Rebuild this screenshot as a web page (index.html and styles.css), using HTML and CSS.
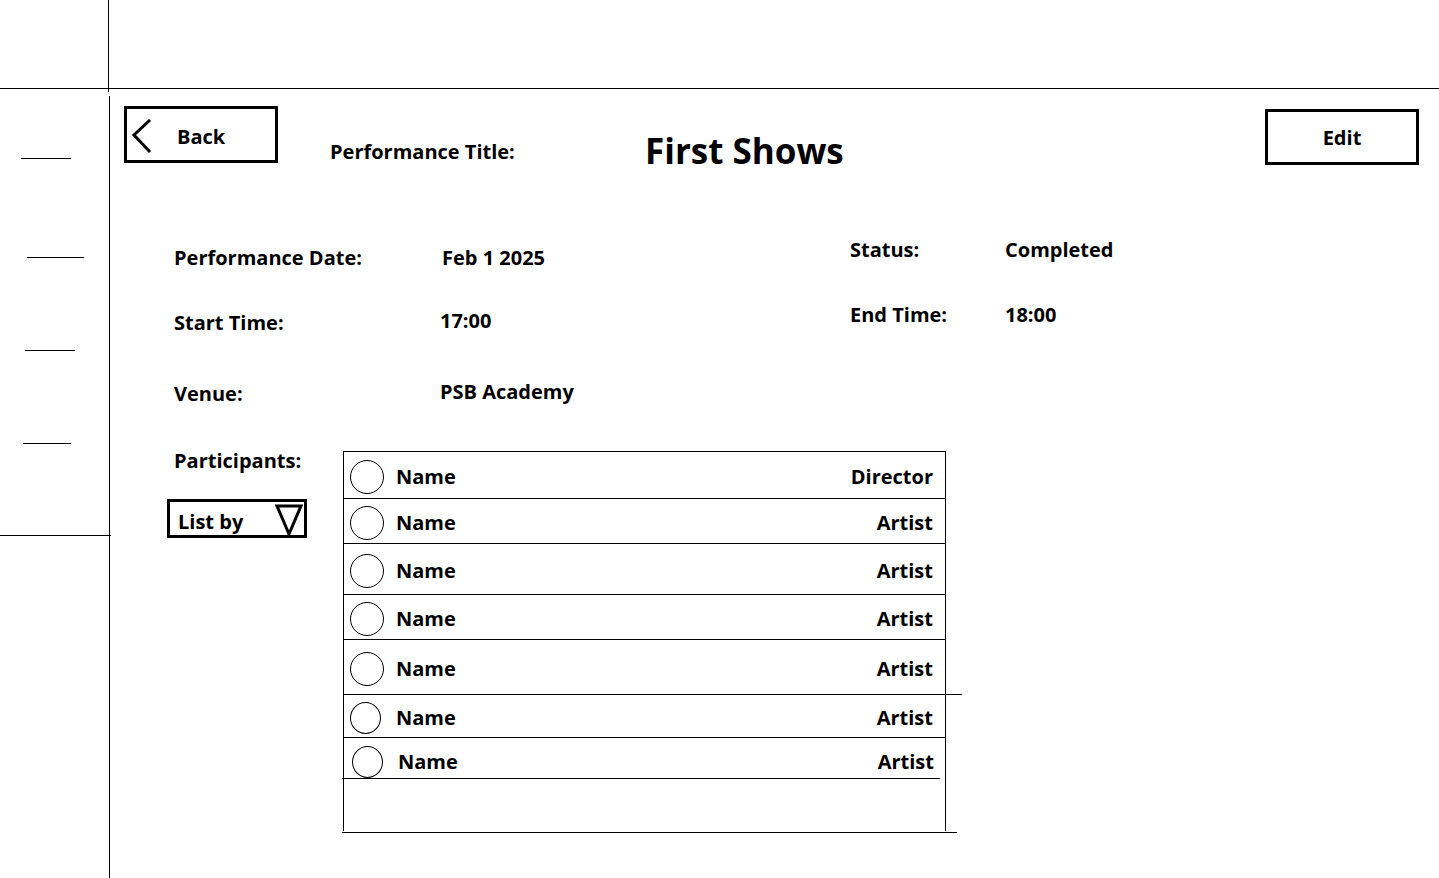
FILE: index.html
```html
<!DOCTYPE html>
<html lang="en">
<head>
<meta charset="utf-8">
<title>Performance Details</title>
<link rel="stylesheet" href="styles.css">
</head>
<body>
<div class="app">
  <header class="topbar">
    <div class="corner"></div>
  </header>
  <div class="layout">
    <nav class="sidebar">
      <span class="dash dash-1"></span>
      <span class="dash dash-2"></span>
      <span class="dash dash-3"></span>
      <span class="dash dash-4"></span>
      <span class="side-rule"></span>
    </nav>
    <main class="main">
      <div class="head">
        <button class="btn btn-back">
          <svg class="chev" width="22" height="36" viewBox="0 0 22 36"><polyline points="19,1 3,16 19,33" fill="none" stroke="#000" stroke-width="3"/></svg>
          <span class="btn-back-text">Back</span>
        </button>
        <div class="title-label">Performance Title:</div>
        <h1 class="title">First Shows</h1>
        <button class="btn btn-edit">Edit</button>
      </div>

      <div class="details">
        <div class="lbl">Performance Date:</div>
        <div class="val val-date">Feb 1 2025</div>
        <div class="lbl hi">Status:</div>
        <div class="val hi">Completed</div>

        <div class="lbl">Start Time:</div>
        <div class="val up2">17:00</div>
        <div class="lbl hi">End Time:</div>
        <div class="val hi">18:00</div>

        <div class="lbl">Venue:</div>
        <div class="val up2">PSB Academy</div>
      </div>

      <div class="participants">
        <div class="part-left">
          <div class="lbl part-label">Participants:</div>
          <div class="listby">
            <span>List by</span>
            <svg class="tri" width="28" height="34" viewBox="0 0 28 34"><polygon points="2,3 26,3 14,31" fill="none" stroke="#000" stroke-width="3" stroke-linejoin="miter"/></svg>
          </div>
        </div>
        <div class="plist">
          <div class="row"><span class="avatar"></span><span class="pname">Name</span><span class="prole">Director</span></div>
          <div class="row"><span class="avatar"></span><span class="pname">Name</span><span class="prole">Artist</span></div>
          <div class="row"><span class="avatar"></span><span class="pname">Name</span><span class="prole">Artist</span></div>
          <div class="row"><span class="avatar"></span><span class="pname">Name</span><span class="prole">Artist</span></div>
          <div class="row row-wide"><span class="avatar"></span><span class="pname">Name</span><span class="prole">Artist</span></div>
          <div class="row"><span class="avatar avatar-sm"></span><span class="pname">Name</span><span class="prole">Artist</span></div>
          <div class="row row-short"><span class="avatar avatar-sm"></span><span class="pname">Name</span><span class="prole">Artist</span></div>
          <div class="list-end"></div>
        </div>
      </div>
    </main>
  </div>
</div>
</body>
</html>
```

FILE: styles.css
```css
* { box-sizing: border-box; }
html, body { margin: 0; padding: 0; background: #fff; }
body {
  font-family: "Open Sans", "Noto Sans", sans-serif;
  font-weight: 700;
  color: #000;
  font-size: 20px;
}
.app {
  width: 1439px;
  height: 878px;
  overflow: hidden;
  display: flex;
  flex-direction: column;
}
.topbar {
  height: 89px;
  flex: none;
  border-bottom: 1px solid #000;
}
.corner {
  width: 109px;
  height: 92px;
  border-right: 1px solid #000;
}
.layout {
  flex: 1;
  display: flex;
}
.sidebar {
  width: 110px;
  flex: none;
  margin-top: 7px;
  border-right: 1px solid #000;
  display: flex;
  flex-direction: column;
}
.dash { display: block; height: 1px; background: #000; }
.dash-1 { margin: 62px 0 0 21px; width: 50px; }
.dash-2 { margin: 98px 0 0 27px; width: 57px; }
.dash-3 { margin: 92px 0 0 25px; width: 50px; }
.dash-4 { margin: 92px 0 0 23px; width: 48px; }
.side-rule { display: block; height: 1px; background: #000; width: 111px; margin-top: 91px; }

.main { flex: 1; min-width: 0; }

.head {
  height: 88px;
  display: flex;
  align-items: flex-start;
}
.btn {
  font: inherit;
  color: #000;
  background: #fff;
  border: 3px solid #000;
  padding: 0;
  cursor: pointer;
}
.btn-back {
  margin: 17px 0 0 14px;
  width: 154px;
  height: 57px;
  display: flex;
  align-items: center;
}
.chev { margin-left: 4px; margin-top: 4px; flex: none; }
.btn-back-text { margin-left: 24px; margin-top: 4px; line-height: 28px; }
.title-label {
  margin: 49px 0 0 52px;
  width: 315px;
  line-height: 28px;
}
.title {
  margin: 38px 0 0 0;
  font-size: 35px;
  line-height: 48px;
  font-weight: 700;
}
.btn-edit {
  margin: 20px 20px 0 auto;
  width: 154px;
  height: 56px;
  line-height: 28px;
  padding-top: 2px;
}

.details {
  margin: 67px 0 0 64px;
  display: grid;
  grid-template-columns: 266px 410px 155px auto;
  grid-template-rows: 65px 71px 28px;
  align-items: start;
}
.lbl, .val { line-height: 28px; white-space: nowrap; }
.val-date { margin-left: 2px; }
.hi { margin-top: -8px; }
.up2 { margin-top: -2px; }

.participants {
  margin: 39px 0 0 57px;
  display: flex;
  align-items: flex-start;
}
.part-left { width: 176px; flex: none; }
.part-label { margin-left: 7px; }
.listby {
  margin-top: 24px;
  width: 140px;
  height: 39px;
  border: 3px solid #000;
  display: flex;
  align-items: center;
  padding-left: 8px;
}
.listby span { line-height: 28px; margin-top: 6px; }
.tri { margin-left: auto; margin-right: 1px; margin-top: 2px; }

.plist {
  margin-top: 4px;
  width: 603px;
  border: 1px solid #000;
  border-bottom: none;
  height: 380px;
  display: flex;
  flex-direction: column;
}
.row {
  display: flex;
  align-items: center;
  padding: 4px 12px 0 6px;
  border-bottom: 1px solid #000;
  flex: none;
}
.row:nth-child(1) { height: 47px; }
.row:nth-child(2) { height: 45px; }
.row:nth-child(3) { height: 51px; }
.row:nth-child(4) { height: 45px; }
.row:nth-child(5) { height: 55px; }
.row:nth-child(6) { height: 43px; }
.row:nth-child(7) { height: 41px; padding-top: 8px; }
.row-wide { margin-right: -17px; padding-right: 29px; }
.row-short { margin-left: -2px; margin-right: 5px; padding-left: 10px; padding-right: 6px; }
.avatar {
  width: 34px;
  height: 34px;
  border: 1px solid #000;
  border-radius: 50%;
  flex: none;
}
.avatar-sm { width: 31px; height: 32px; margin-right: 3px; }
.pname { margin-left: 12px; line-height: 28px; }
.prole { margin-left: auto; line-height: 28px; }
.list-end {
  height: 54px;
  flex: none;
  margin: 0 -12px 0 -2px;
  border-bottom: 1px solid #000;
}
```
